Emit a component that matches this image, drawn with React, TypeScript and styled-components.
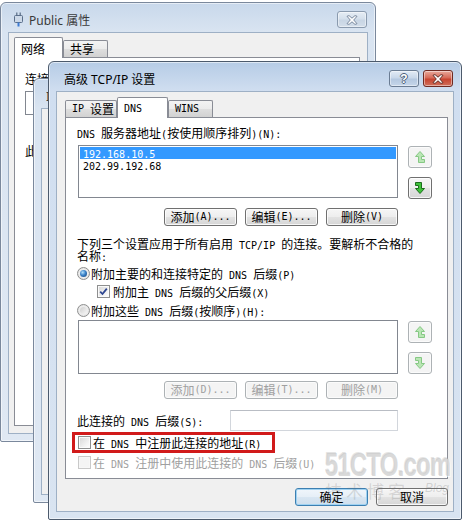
import React from "react";
import styled, { createGlobalStyle } from "styled-components";

const GlobalStyle = createGlobalStyle`
  html, body { margin: 0; padding: 0; background: #fff; }
  body { font-family: "Noto Sans CJK SC", sans-serif; font-size: 12px; color: #000; }
`;

// ascii runs get a narrow mono face so half-width chars are 6px like SimSun
const Latin = styled.span`
  font-family: "DejaVu Sans Mono", "Liberation Mono", monospace;
  font-size: 10px;
  line-height: 0;
  white-space: pre;
`;

const Sim = ({ t }: { t: string }) => (
  <>
    {t.split(/([\x20-\x7e]+)/).map((part, i) =>
      i % 2 === 1 ? <Latin key={i}>{part}</Latin> : part
    )}
  </>
);

const Desktop = styled.div`
  position: relative;
  width: 463px;
  height: 520px;
  overflow: hidden;
  background: #fff;
`;

const Window = styled.div<{ $x: number; $y: number; $w: number; $h: number; $active?: boolean }>`
  position: absolute;
  left: ${(p) => p.$x}px;
  top: ${(p) => p.$y}px;
  width: ${(p) => p.$w}px;
  height: ${(p) => p.$h}px;
  box-sizing: border-box;
  display: flex;
  flex-direction: column;
  padding: 0 7px 7px;
  border: 1px solid ${(p) => (p.$active ? "#4c5a6c" : "#7a889c")};
  border-radius: 6px 6px 2px 2px;
  background: ${(p) =>
    p.$active
      ? "linear-gradient(#b6cce6, #d0def0 29px, #d9e4f1)"
      : "linear-gradient(#c8d8eb, #d9e4f1 29px, #dfe8f3)"};
  box-shadow: inset 0 0 0 1px rgba(255, 255, 255, 0.55);
`;

const TitleBar = styled.div<{ $pad?: number }>`
  height: 29px;
  flex: none;
  box-sizing: border-box;
  padding: 4px 1px 0 ${(p) => p.$pad ?? 6}px;
  display: flex;
  align-items: center;
  gap: 4px;
`;

const Title = styled.span<{ $active?: boolean }>`
  flex: 1;
  margin-left: 2px;
  font-family: "Noto Sans", "Noto Sans CJK SC", sans-serif;
  font-size: 12px;
  white-space: nowrap;
  overflow: hidden;
  color: ${(p) => (p.$active ? "#000" : "#3a3a3a")};
`;

const CapBtn = styled.div<{ $kind: "help" | "close" | "idle" }>`
  width: 30px;
  height: 17px;
  flex: none;
  box-sizing: border-box;
  border-radius: 3px;
  display: flex;
  align-items: center;
  justify-content: center;
  border: 1px solid
    ${(p) => (p.$kind === "close" ? "#6e2a22" : p.$kind === "help" ? "#6a7c93" : "#8a9aae")};
  background: ${(p) =>
    p.$kind === "close"
      ? "linear-gradient(#e9aa9c, #d66a58 45%, #c74430 55%, #d0705c)"
      : p.$kind === "help"
      ? "linear-gradient(#e2ebf5, #c9d8ea 45%, #b4c8e0 55%, #c6d6ea)"
      : "linear-gradient(#e6edf5, #d5e0ec 45%, #c8d5e4 55%, #d3deea)"};
  box-shadow: inset 0 0 0 1px rgba(255, 255, 255, 0.45);
`;

const HelpMark = styled.span`
  font-family: "Liberation Sans", sans-serif;
  font-weight: bold;
  font-size: 12px;
  line-height: 12px;
  color: #fff;
  text-shadow: 1px 0 #4d6079, -1px 0 #4d6079, 0 1px #4d6079, 0 -1px #4d6079;
`;

const Client = styled.div<{ $pad: string }>`
  flex: 1;
  min-height: 0;
  background: #f0f0f0;
  border: 1px solid #9eb0c5;
  padding: ${(p) => p.$pad};
  display: flex;
  flex-direction: column;
`;

const TabStrip = styled.div`
  display: flex;
  align-items: flex-end;
  height: 20px;
  flex: none;
  position: relative;
  z-index: 1;
`;

const Tab = styled.div<{ $w: number; $active?: boolean }>`
  width: ${(p) => p.$w}px;
  height: ${(p) => (p.$active ? 21 : 17)}px;
  margin-bottom: ${(p) => (p.$active ? -1 : 0)}px;
  box-sizing: border-box;
  border: 1px solid #898c95;
  border-bottom: none;
  border-radius: 2px 2px 0 0;
  padding: ${(p) => (p.$active ? "1px" : "0")} 0 0 6px;
  display: flex;
  align-items: center;
  line-height: 12px;
  white-space: nowrap;
  background: ${(p) =>
    p.$active ? "#fff" : "linear-gradient(#f3f3f3, #ebebeb 50%, #dedede 51%, #d2d2d2)"};
`;

const Panel = styled.div<{ $h: number; $pad: string }>`
  height: ${(p) => p.$h}px;
  flex: none;
  box-sizing: border-box;
  border: 1px solid #898c95;
  background: #fff;
  padding: ${(p) => p.$pad};
  display: flex;
  flex-direction: column;
  align-items: flex-start;
`;

const Label = styled.div<{ $mt?: number; $off?: boolean }>`
  margin-top: ${(p) => p.$mt ?? 0}px;
  height: 12px;
  line-height: 12px;
  white-space: nowrap;
  color: ${(p) => (p.$off ? "#a0a0a0" : "#000")};
`;

const Caption = styled.span`
  line-height: 13px;
  white-space: nowrap;
`;

const AdapterBox = styled.div`
  margin-top: 6px;
  width: 320px;
  height: 24px;
  box-sizing: border-box;
  border: 1px solid #828790;
  background: #fff;
`;

const ListRow = styled.div<{ $mt: number }>`
  margin: ${(p) => p.$mt}px 0 0 1px;
  display: flex;
  gap: 10px;
`;

const ListBox = styled.div<{ $h: number }>`
  width: 320px;
  height: ${(p) => p.$h}px;
  box-sizing: border-box;
  border: 1px solid #828790;
  background: #fff;
  padding: 1px;
`;

const ListItem = styled.div<{ $sel?: boolean }>`
  height: 12px;
  line-height: 12px;
  padding-left: 3px;
  white-space: nowrap;
  background: ${(p) => (p.$sel ? "#3399ff" : "transparent")};
  color: ${(p) => (p.$sel ? "#fff" : "#000")};
`;

const SideCol = styled.div`
  display: flex;
  flex-direction: column;
  gap: 9px;
  padding-top: 1px;
`;

const ButtonRow = styled.div<{ $mt: number }>`
  margin: ${(p) => p.$mt}px 0 0 1px;
  width: 320px;
  display: flex;
  justify-content: flex-end;
  gap: 8px;
`;

const Btn = styled.div<{ $w?: number; $h?: number; $off?: boolean; $primary?: boolean }>`
  width: ${(p) => p.$w ?? 73}px;
  height: ${(p) => p.$h ?? 18}px;
  box-sizing: border-box;
  display: flex;
  align-items: center;
  justify-content: center;
  border: 1px solid ${(p) => (p.$off ? "#adb2b5" : p.$primary ? "#3c7fb1" : "#707070")};
  border-radius: 3px;
  background: ${(p) =>
    p.$off
      ? "#f4f4f4"
      : p.$primary
      ? "linear-gradient(#f0f6fb, #e6eff7 48%, #d8e6f2 52%, #cfdeec)"
      : "linear-gradient(#f6f6f6, #eeeeee 48%, #e2e2e2 52%, #d6d6d6)"};
  box-shadow: inset 0 0 0 1px
    ${(p) => (p.$primary ? "#9fd2f2" : p.$off ? "#fbfbfb" : "rgba(255, 255, 255, 0.8)")};
  color: ${(p) => (p.$off ? "#a0a0a0" : "#000")};
  line-height: 12px;
  white-space: nowrap;
`;

const OptionRow = styled.div<{ $mt: number; $ml?: number; $off?: boolean }>`
  margin: ${(p) => p.$mt}px 0 0 ${(p) => p.$ml ?? 0}px;
  height: 13px;
  display: flex;
  align-items: center;
  color: ${(p) => (p.$off ? "#a0a0a0" : "#000")};
`;

const Radio = styled.span<{ $on?: boolean }>`
  width: 13px;
  height: 13px;
  flex: none;
  margin-right: 1px;
  box-sizing: border-box;
  border-radius: 50%;
  border: 1px solid #8e8f8f;
  background: radial-gradient(circle, #fff 0, #eaeaea 60%, #d4d4d4 100%);
  display: flex;
  align-items: center;
  justify-content: center;
  &::after {
    content: "";
    width: 7px;
    height: 7px;
    border-radius: 50%;
    background: ${(p) =>
      p.$on
        ? "radial-gradient(circle at 38% 35%, #b4e0fa 0, #3a82c9 45%, #173f73 100%)"
        : "linear-gradient(135deg, #cfcfcf, #f6f6f6)"};
  }
`;

const Check = styled.span<{ $off?: boolean; $gap?: number }>`
  width: 13px;
  height: 13px;
  flex: none;
  margin-right: ${(p) => p.$gap ?? 2}px;
  box-sizing: border-box;
  border: 1px solid ${(p) => (p.$off ? "#c9c9c9" : "#8e8f8f")};
  box-shadow: inset 0 0 0 1px ${(p) => (p.$off ? "#f7f7f7" : "#fafafa")};
  background: ${(p) =>
    p.$off ? "#f4f4f4" : "linear-gradient(135deg, #d6d6d6, #f2f2f2 65%, #fff)"};
  display: flex;
  align-items: center;
  justify-content: center;
`;

const SuffixRow = styled.div<{ $mt: number }>`
  margin-top: ${(p) => p.$mt}px;
  width: 321px;
  display: flex;
  align-items: center;
  justify-content: space-between;
`;

const TextBox = styled.div`
  width: 168px;
  height: 21px;
  box-sizing: border-box;
  border: 1px solid #d2d6dc;
  border-top-color: #b9bdc4;
  background: #fff;
`;

const Marked = styled.div`
  margin: 1px 0 0 -5px;
  width: 203px;
  height: 21px;
  box-sizing: border-box;
  border: 3px solid #d11a1a;
  padding-left: 3px;
  display: flex;
  align-items: center;
`;

const DialogFoot = styled.div`
  margin-top: 9px;
  display: flex;
  justify-content: flex-end;
  gap: 8px;
`;

const Watermark = styled.div`
  position: absolute;
  left: 325px;
  top: 447px;
  width: 130px;
  pointer-events: none;
`;

const WmLogo = styled.div`
  font-family: "Liberation Sans", sans-serif;
  font-weight: bold;
  font-size: 34px;
  line-height: 34px;
  letter-spacing: -1px;
  transform: scaleX(0.7);
  transform-origin: left top;
  white-space: nowrap;
  color: rgba(196, 196, 196, 0.6);
  text-shadow: 1px 1px 0 rgba(255, 255, 255, 0.8), -1px -1px 0 rgba(150, 150, 150, 0.25);
`;

const WmSub = styled.div`
  display: flex;
  align-items: flex-start;
  justify-content: space-between;
  white-space: nowrap;
`;

const WmWords = styled.span`
  font-size: 17px;
  line-height: 20px;
  letter-spacing: 4px;
  color: rgba(110, 110, 110, 0.22);
`;

const WmBlog = styled.span`
  font-family: "Liberation Sans", sans-serif;
  font-style: italic;
  font-size: 12px;
  color: rgba(110, 110, 110, 0.25);
  margin-right: 6px;
`;

const XGlyph = ({ dim }: { dim?: boolean }) => (
  <svg width="12" height="10" viewBox="0 0 12 10">
    <path
      d="M1 1.3 L3 0.6 L6 3.2 L9 0.6 L11 1.3 L7.7 5 L11 8.7 L9 9.4 L6 6.8 L3 9.4 L1 8.7 L4.3 5 Z"
      fill="#fff"
      stroke={dim ? "#6d7e95" : "#52201a"}
      strokeWidth="0.9"
      strokeLinejoin="round"
    />
  </svg>
);

const PlugIcon = () => (
  <svg width="9" height="15" viewBox="0 0 9 15">
    <rect x="2" y="0.5" width="1.5" height="3" fill="#6f8199" />
    <rect x="5.5" y="0.5" width="1.5" height="3" fill="#6f8199" />
    <rect x="0.5" y="3.5" width="8" height="7" rx="1" fill="#cdd9e8" stroke="#5b6f8a" />
    <rect x="3.5" y="10.5" width="2" height="4" fill="#3c7bd3" />
  </svg>
);

const MoveIcon = ({ dir, dim }: { dir: "up" | "down"; dim?: boolean }) => (
  <svg width="12" height="14" viewBox="0 0 12 14">
    <g transform={dir === "up" ? "rotate(180 6 7)" : undefined}>
      <path
        d="M1.5 1.5 H7.5 V7.5 H10.5 L6 12.5 L1.5 7.5 H4.5 V4.5 H1.5 Z"
        fill={dim ? "#b9e6b4" : "#3fc23a"}
        stroke={dim ? "#86c884" : "#1b6d1b"}
        strokeWidth="1"
        strokeLinejoin="round"
      />
    </g>
  </svg>
);

const Tick = () => (
  <svg width="9" height="9" viewBox="0 0 9 9">
    <path d="M1.2 4.6 L3.5 7 L7.8 1.6" fill="none" stroke="#2d4590" strokeWidth="1.8" />
  </svg>
);

export default function App() {
  return (
    <>
      <GlobalStyle />
      <Desktop>
        <Window $x={0} $y={2} $w={376} $h={440}>
          <TitleBar>
            <PlugIcon />
            <Title>Public 属性</Title>
            <CapBtn $kind="idle">
              <XGlyph dim />
            </CapBtn>
          </TitleBar>
          <Client $pad="4px 7px 0 5px">
            <TabStrip>
              <Tab $w={49} $active>
                网络
              </Tab>
              <Tab $w={45}>共享</Tab>
            </TabStrip>
            <Panel $h={369} $pad="15px 0 0 10px">
              <Label>连接时使用:</Label>
              <AdapterBox />
              <Label $mt={30}>此连接使用下列项目:</Label>
            </Panel>
          </Client>
        </Window>

        <Window $x={33} $y={78} $w={380} $h={425}>
          <TitleBar $pad={3}>
            <Title>Internet 协议版本 4 (TCP/IPv4) 属性</Title>
          </TitleBar>
          <Client $pad="0" />
        </Window>

        <Window $x={48} $y={61} $w={414} $h={459} $active>
          <TitleBar>
            <Title $active>高级 TCP/IP 设置</Title>
            <CapBtn $kind="help">
              <HelpMark>?</HelpMark>
            </CapBtn>
            <CapBtn $kind="close">
              <XGlyph />
            </CapBtn>
          </TitleBar>
          <Client $pad="5px 5px 0 8px">
            <TabStrip>
              <Tab $w={52}>
                <Sim t="IP 设置" />
              </Tab>
              <Tab $w={51} $active>
                <Sim t="DNS" />
              </Tab>
              <Tab $w={45}>
                <Sim t="WINS" />
              </Tab>
            </TabStrip>
            <Panel $h={362} $pad="9px 0 0 11px">
              <Label>
                <Sim t="DNS 服务器地址(按使用顺序排列)(N):" />
              </Label>
              <ListRow $mt={6}>
                <ListBox $h={53}>
                  <ListItem $sel>
                    <Sim t="192.168.10.5" />
                  </ListItem>
                  <ListItem>
                    <Sim t="202.99.192.68" />
                  </ListItem>
                </ListBox>
                <SideCol>
                  <Btn $w={24} $h={22} $off>
                    <MoveIcon dir="up" dim />
                  </Btn>
                  <Btn $w={24} $h={22}>
                    <MoveIcon dir="down" />
                  </Btn>
                </SideCol>
              </ListRow>
              <ButtonRow $mt={9}>
                <Btn>
                  <Sim t="添加(A)..." />
                </Btn>
                <Btn>
                  <Sim t="编辑(E)..." />
                </Btn>
                <Btn $w={72}>
                  <Sim t="删除(V)" />
                </Btn>
              </ButtonRow>
              <Label $mt={12}>
                <Sim t="下列三个设置应用于所有启用 TCP/IP 的连接。要解析不合格的" />
              </Label>
              <Label>
                <Sim t="名称:" />
              </Label>
              <OptionRow $mt={5}>
                <Radio $on />
                <Caption>
                  <Sim t="附加主要的和连接特定的 DNS 后缀(P)" />
                </Caption>
              </OptionRow>
              <OptionRow $mt={5} $ml={20}>
                <Check $gap={3}>
                  <Tick />
                </Check>
                <Caption>
                  <Sim t="附加主 DNS 后缀的父后缀(X)" />
                </Caption>
              </OptionRow>
              <OptionRow $mt={6}>
                <Radio />
                <Caption>
                  <Sim t="附加这些 DNS 后缀(按顺序)(H):" />
                </Caption>
              </OptionRow>
              <ListRow $mt={3}>
                <ListBox $h={54} />
                <SideCol>
                  <Btn $w={24} $h={22} $off>
                    <MoveIcon dir="up" dim />
                  </Btn>
                  <Btn $w={24} $h={22} $off>
                    <MoveIcon dir="down" dim />
                  </Btn>
                </SideCol>
              </ListRow>
              <ButtonRow $mt={7}>
                <Btn $off>
                  <Sim t="添加(D)..." />
                </Btn>
                <Btn $off>
                  <Sim t="编辑(T)..." />
                </Btn>
                <Btn $w={72} $off>
                  <Sim t="删除(M)" />
                </Btn>
              </ButtonRow>
              <SuffixRow $mt={11}>
                <Caption>
                  <Sim t="此连接的 DNS 后缀(S):" />
                </Caption>
                <TextBox />
              </SuffixRow>
              <Marked>
                <Check />
                <Caption>
                  <Sim t="在 DNS 中注册此连接的地址(R)" />
                </Caption>
              </Marked>
              <OptionRow $mt={3} $ml={1} $off>
                <Check $off />
                <Caption>
                  <Sim t="在 DNS 注册中使用此连接的 DNS 后缀(U)" />
                </Caption>
              </OptionRow>
            </Panel>
            <DialogFoot>
              <Btn $primary>确定</Btn>
              <Btn $w={72}>取消</Btn>
            </DialogFoot>
          </Client>
        </Window>

        <Watermark>
          <WmLogo>51CTO.com</WmLogo>
          <WmSub>
            <WmWords>技术博客</WmWords>
            <WmBlog>Blog</WmBlog>
          </WmSub>
        </Watermark>
      </Desktop>
    </>
  );
}
